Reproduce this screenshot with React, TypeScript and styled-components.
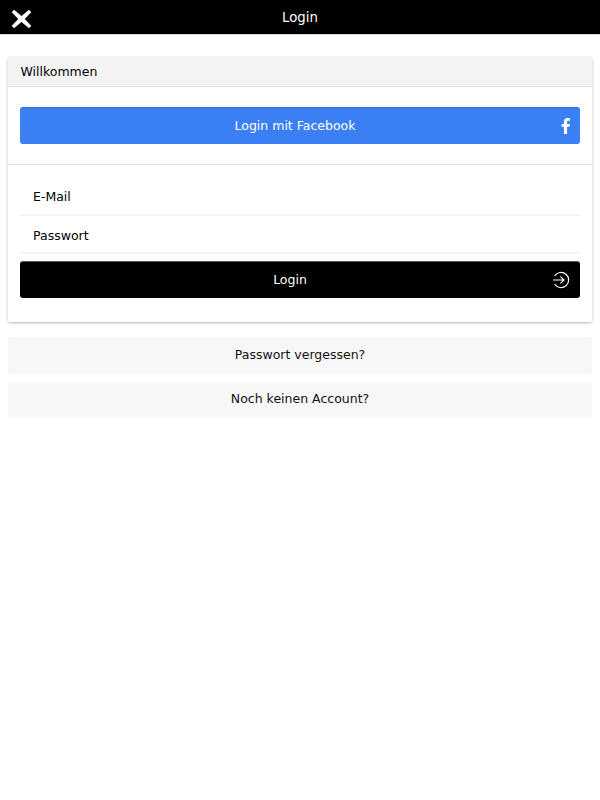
import { createGlobalStyle } from "styled-components";
import styled from "styled-components";

const GlobalStyle = createGlobalStyle`
  html, body {
    margin: 0;
    padding: 0;
    background: #fff;
    font-family: "DejaVu Sans", sans-serif;
    font-size: 12.5px;
    color: #000;
  }
`;

function CloseIcon() {
  return (
    <svg width="21" height="20" viewBox="0 0 21 20">
      <path d="M3 1 L10.5 7.2 L18 1 L20 3.2 L13.5 10 L20 16.8 L18 19 L10.5 12.8 L3 19 L1 16.8 L7.5 10 L1 3.2 Z" fill="#fff" stroke="#fff" strokeWidth="0.5" strokeLinejoin="round" />
    </svg>
  );
}

function FacebookIcon() {
  return (
    <svg width="10" height="17" viewBox="0 0 10 17">
      <path d="M2.9 16.5 V9.2 H0.6 V6.4 H2.9 V4.3 C2.9 1.8 4.5 0.5 6.7 0.5 C7.8 0.5 8.7 0.6 9 0.7 V3.3 H7.5 C6.3 3.3 6.1 3.8 6.1 4.7 V6.4 H8.9 L8.5 9.2 H6.1 V16.5 Z" fill="#fff" />
    </svg>
  );
}

function LoginIcon() {
  return (
    <svg width="18" height="18" viewBox="0 0 18 18" fill="none" stroke="#fff" strokeWidth="1.2">
      <path d="M2.6 5 A7.6 7.6 0 1 1 2.6 13" />
      <path d="M1 9 H12 M8.4 5.6 L12 9 L8.4 12.4" />
    </svg>
  );
}

export default function App() {
  return (
    <>
      <GlobalStyle />
      <Header>
        <CloseButton>
          <CloseIcon />
        </CloseButton>
        <HeaderTitle>Login</HeaderTitle>
      </Header>
      <Content>
        <Card>
          <CardHeader>Willkommen</CardHeader>
          <FacebookSection>
            <ActionButton $bg="#3b7ff5" $border="#2b6fe8" $shift={10}>
              Login mit Facebook
              <ButtonIcon $right={9}>
                <FacebookIcon />
              </ButtonIcon>
            </ActionButton>
          </FacebookSection>
          <FormSection>
            <Field placeholder="E-Mail" type="email" />
            <Field placeholder="Passwort" type="password" />
            <ActionButton $bg="#000" $border="#555" $shift={20}>
              Login
              <ButtonIcon $right={10}>
                <LoginIcon />
              </ButtonIcon>
            </ActionButton>
          </FormSection>
        </Card>
        <LinkButton>Passwort vergessen?</LinkButton>
        <LinkButton>Noch keinen Account?</LinkButton>
      </Content>
    </>
  );
}

const Header = styled.header`
  position: relative;
  height: 34px;
  background: #000;
  border-bottom: 1px solid #d8d8d8;
  display: flex;
  align-items: center;
  justify-content: center;
  color: #fff;
`;

const CloseButton = styled.div`
  position: absolute;
  left: 11px;
  top: 9px;
  display: flex;
`;

const HeaderTitle = styled.div`
  font-size: 13.3px;
  line-height: 34px;
  padding-top: 1px;
`;

const Content = styled.main`
  padding: 22px 8px 0;
  display: flex;
  flex-direction: column;
`;

const Card = styled.section`
  background: #fff;
  border-radius: 2px;
  box-shadow: 0 1px 3px rgba(0, 0, 0, 0.28);
  height: 265px;
  margin-bottom: 15px;
`;

const CardHeader = styled.div`
  height: 29px;
  line-height: 29px;
  padding: 0 12.5px;
  background: #f4f4f4;
  border-bottom: 1px solid #e0e0e0;
  border-radius: 2px 2px 0 0;
`;

const FacebookSection = styled.div`
  padding: 20px 12px;
  border-bottom: 1px solid #dedede;
`;

const FormSection = styled.div`
  padding: 13px 12px 0;
  display: flex;
  flex-direction: column;
`;

const Field = styled.input`
  height: 38px;
  box-sizing: border-box;
  border: 0;
  border-bottom: 2px solid #f3f3f3;
  padding: 0 13px;
  margin: 0;
  outline: none;
  font-family: inherit;
  font-size: 12.5px;
  color: #000;
  background: transparent;

  &::placeholder {
    color: #000;
    opacity: 1;
  }

  &[type="password"] {
    padding-top: 2px;
    margin-bottom: 7px;
  }
`;

const ActionButton = styled.button<{ $bg: string; $border: string; $shift: number }>`
  position: relative;
  display: block;
  width: 100%;
  height: 37px;
  box-sizing: border-box;
  padding: 0 ${(p) => p.$shift}px 2px 0;
  background: ${(p) => p.$bg};
  border: 0;
  border-top: 1px solid ${(p) => p.$border};
  border-radius: 3px;
  font-family: inherit;
  font-size: 12.5px;
  color: #fff;
  text-align: center;
`;

const ButtonIcon = styled.span<{ $right: number }>`
  position: absolute;
  right: ${(p) => p.$right}px;
  top: 50%;
  transform: translateY(-50%);
  display: flex;
`;

const LinkButton = styled.div`
  height: 36.5px;
  line-height: 35px;
  text-align: center;
  background: #f7f7f7;
  border-radius: 3px;
  margin-bottom: 8px;
  color: #111;

  & + & {
    line-height: 34px;
  }
`;
